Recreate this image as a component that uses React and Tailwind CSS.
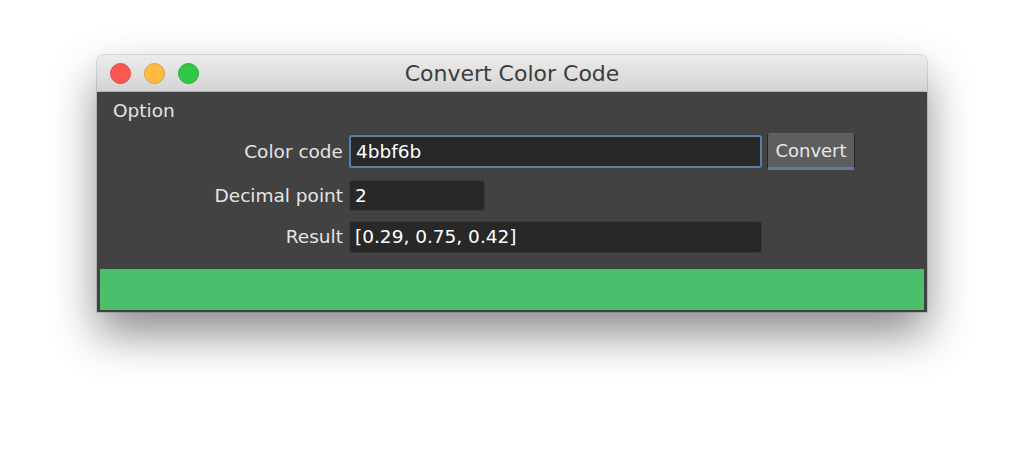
export default function App() {
  return (
    <div className="w-[1024px] h-[453px] bg-white pt-[55px] pl-[97px] font-['DejaVu_Sans',sans-serif]">
      <div className="w-[830px] rounded-t-[6px] shadow-[0_22px_45px_rgba(0,0,0,0.45),0_0_0_1px_rgba(0,0,0,0.12)]">
        <div className="h-[37px] rounded-t-[6px] bg-gradient-to-b from-[#ececec] to-[#d4d4d4] border-b border-[#b4b4b4] flex items-center relative">
          <div className="flex gap-[13px] pl-[13px]">
            <span className="w-[21px] h-[21px] rounded-full bg-[#fc5753] border border-[#df4744]"></span>
            <span className="w-[21px] h-[21px] rounded-full bg-[#fdbc40] border border-[#de9f34]"></span>
            <span className="w-[21px] h-[21px] rounded-full bg-[#33c748] border border-[#27aa35]"></span>
          </div>
          <div className="absolute inset-0 flex items-center justify-center text-[22px] text-[#3c3c3c]">Convert Color Code</div>
        </div>
        <div className="h-[220px] bg-[#424242] flex flex-col text-[18.5px] text-[#e4e4e4]">
          <div className="pl-[16px] pt-[5px] h-[41px]">Option</div>
          <div className="flex items-center h-[37px]">
            <div className="w-[252px] pr-[6px] text-right">Color code</div>
            <div className="w-[413px] h-[33px] bg-[#282828] border-2 border-[#5a7fa6] rounded-[3px] flex items-center pl-[5px] text-white">4bbf6b</div>
            <button className="ml-[5px] w-[88px] h-[37px] bg-[#5e5e5e] border border-[#262626] border-t-[#4f6a88] border-b-[3px] border-b-[#5a7fa6] rounded-[3px] text-[#e8e8e8] text-[18px]">Convert</button>
          </div>
          <div className="flex items-center h-[31px] mt-[10px]">
            <div className="w-[252px] pr-[6px] text-right">Decimal point</div>
            <div className="w-[136px] h-[31px] bg-[#282828] border border-[#383838] rounded-[3px] flex items-center pl-[5px] text-white">2</div>
          </div>
          <div className="flex items-center h-[32px] mt-[10px]">
            <div className="w-[252px] pr-[6px] text-right">Result</div>
            <div className="w-[413px] h-[32px] bg-[#282828] border border-[#383838] rounded-[3px] flex items-center pl-[5px] text-white">[0.29, 0.75, 0.42]</div>
          </div>
          <div className="mt-[16px] mx-[3px] h-[41px] bg-[#4bbf6b]"></div>
        </div>
      </div>
    </div>
  );
}
